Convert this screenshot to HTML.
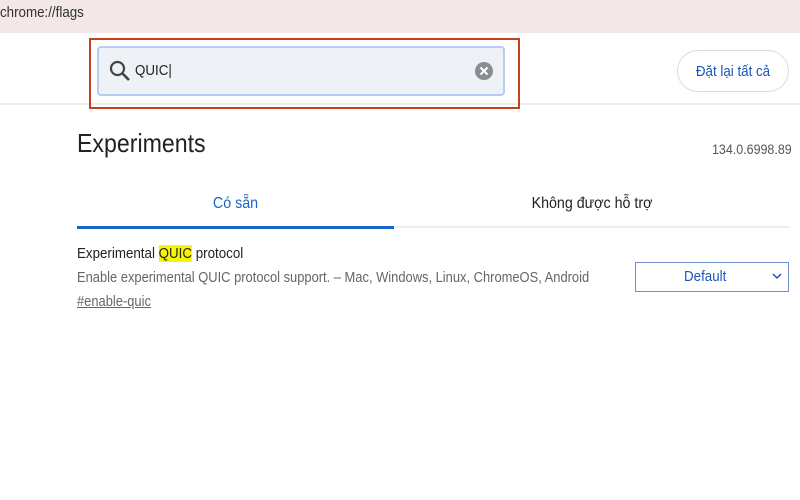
<!DOCTYPE html>
<html><head><meta charset="utf-8"><style>
*{margin:0;padding:0;box-sizing:border-box}
body{width:800px;height:500px;background:#fff;position:relative;overflow:hidden;font-family:"Liberation Sans","Noto Sans CJK SC",sans-serif;}
.a{position:absolute;white-space:nowrap}
.n{transform:scaleX(.89);transform-origin:0 0}
.c{transform:scaleX(.89);transform-origin:50% 0}
</style></head><body>
<div class="a" style="left:0;top:0;width:800px;height:33px;background:#f3e7e7"></div>
<div class="a n" style="left:0;top:4px;font-size:15px;color:#333">chrome://flags</div>
<div class="a" style="left:0;top:103px;width:800px;height:2px;background:#eceef1"></div>
<div class="a" style="left:89px;top:38px;width:431px;height:71px;border:2px solid #c5401e"></div>
<div class="a" style="left:97px;top:46px;width:408px;height:50px;background:#eef1f6;border:2px solid #b5cdf0;border-radius:4px"></div>
<svg class="a" style="left:108px;top:59px" width="24" height="24" viewBox="0 0 24 24"><circle cx="9.5" cy="9.5" r="6.5" fill="none" stroke="#444" stroke-width="2.2"/><path d="M14.5 14.5L21 21" stroke="#444" stroke-width="2.6"/></svg>
<div class="a n" style="left:135px;top:62px;font-size:15px;color:#222">QUIC|</div>
<svg class="a" style="left:475px;top:62px" width="18" height="18" viewBox="0 0 18 18"><circle cx="9" cy="9" r="9" fill="#8a8d92"/><path d="M5.5 5.5L12.5 12.5M12.5 5.5L5.5 12.5" stroke="#fff" stroke-width="2"/></svg>
<div class="a" style="left:677px;top:50px;width:112px;height:42px;border:1px solid #d7dde6;border-radius:21px"></div>
<div class="a c" style="left:677px;top:63px;width:112px;font-size:15px;color:#1a56b8;text-align:center">Đặt lại tất cả</div>
<div class="a n" style="left:77px;top:128px;font-size:26px;color:#222">Experiments</div>
<div class="a n" style="left:712px;top:141px;font-size:14px;color:#555">134.0.6998.89</div>
<div class="a c" style="left:77px;top:195px;width:317px;text-align:center;font-size:16px;color:#1a63c8">Có sẵn</div>
<div class="a c" style="left:394px;top:195px;width:396px;text-align:center;font-size:16px;color:#222">Không được hỗ trợ</div>
<div class="a" style="left:77px;top:226px;width:713px;height:2px;background:#eceef1"></div>
<div class="a" style="left:77px;top:226px;width:317px;height:3px;background:#1a63c8"></div>
<div class="a n" style="left:77px;top:245px;font-size:15px;color:#222">Experimental <span style="background:#f6f600">QUIC</span> protocol</div>
<div class="a n" style="left:77px;top:270px;font-size:14.5px;color:#666">Enable experimental QUIC protocol support. – Mac, Windows, Linux, ChromeOS, Android</div>
<div class="a n" style="left:77px;top:294px;font-size:14.5px;color:#666;text-decoration:underline">#enable-quic</div>
<div class="a" style="left:635px;top:262px;width:154px;height:30px;border:1px solid #6d93c8"></div>
<div class="a n" style="left:684px;top:268px;font-size:15px;color:#1a56b8">Default</div>
<svg class="a" style="left:772px;top:272px" width="10" height="8" viewBox="0 0 10 8"><path d="M1 2L5 6L9 2" fill="none" stroke="#1a56b8" stroke-width="1.5"/></svg>
</body></html>
